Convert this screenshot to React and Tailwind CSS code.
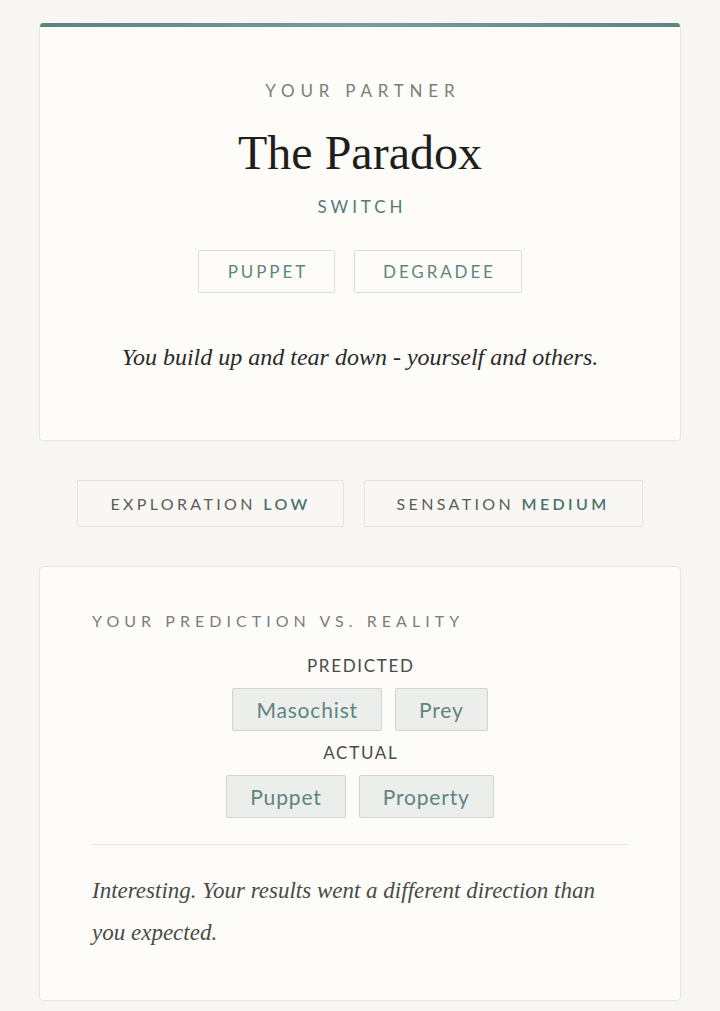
import React from "react";

function Pill({ children }) {
  return (
    <div className="h-[43px] px-[23px] flex items-center border border-[#cfd4d1] bg-[#eceeec] rounded-[2px] font-[Lato,'Open_Sans',sans-serif] text-[21px] text-[#5f857f] tracking-[0.04em]">
      {children}
    </div>
  );
}

function Stat({ label, value }) {
  return (
    <div className="h-[47px] px-[32px] flex items-center border border-[#e6e3de] bg-[#f9f7f4] rounded-[2px] font-[Lato,'Open_Sans',sans-serif] text-[16px] tracking-[0.21em] text-[#5c5c58]">
      {label}&nbsp;<span className="text-[#4a726c] font-semibold">{value}</span>
    </div>
  );
}

export default function App() {
  return (
    <div className="min-h-[1011px] bg-[#f8f6f2] pt-[23px] px-[39px] pb-[10px]">
      {/* Card 1 */}
      <div className="bg-[#fdfcf9] border border-[#e8e5df] border-t-0 rounded-[4px] overflow-hidden">
        <div className="h-[4px] bg-gradient-to-r from-[#5a8580] via-[#7c9b97] to-[#5e857f]" />
        <div className="flex flex-col items-center pt-[52px] pb-[65px]">
          <div className="h-[24px] leading-[24px] font-[Lato,'Open_Sans',sans-serif] text-[17px] tracking-[0.34em] text-[#7d7d78] pl-[0.34em]">YOUR PARTNER</div>
          <div className="mt-[20px] h-[60px] leading-[60px] font-['Liberation_Serif','DejaVu_Serif',serif] text-[48px] text-[#1e1e1c]">The Paradox</div>
          <div className="mt-[12px] h-[24px] leading-[24px] font-[Lato,'Open_Sans',sans-serif] text-[17px] tracking-[0.23em] text-[#557a75] pl-[0.23em]">SWITCH</div>
          <div className="mt-[31px] flex gap-[19px]">
            <div className="w-[137px] h-[43px] flex items-center justify-center border border-[#d9ddd9] rounded-[2px] font-[Lato,'Open_Sans',sans-serif] text-[17px] tracking-[0.17em] pl-[0.17em] text-[#5f857f]">PUPPET</div>
            <div className="w-[168px] h-[43px] flex items-center justify-center border border-[#d9ddd9] rounded-[2px] font-[Lato,'Open_Sans',sans-serif] text-[17px] tracking-[0.17em] pl-[0.17em] text-[#5f857f]">DEGRADEE</div>
          </div>
          <div className="mt-[46px] h-[36px] leading-[36px] font-['Liberation_Serif','DejaVu_Serif',serif] text-[24px] italic text-[#2a2a28]">
            You build up and tear down - yourself and others.
          </div>
        </div>
      </div>

      {/* Stats */}
      <div className="mt-[39px] flex justify-center gap-[20px]">
        <Stat label="EXPLORATION" value="LOW" />
        <Stat label="SENSATION" value="MEDIUM" />
      </div>

      {/* Card 3 */}
      <div className="mt-[39px] bg-[#fdfcf9] border border-[#e8e5df] rounded-[4px] px-[52px] pt-[42px] pb-[46px]">
        <div className="h-[24px] leading-[24px] font-[Lato,'Open_Sans',sans-serif] text-[16px] tracking-[0.315em] text-[#7d7d78]">YOUR PREDICTION VS. REALITY</div>
        <div className="mt-[21px] h-[24px] leading-[24px] text-center font-[Lato,'Open_Sans',sans-serif] text-[17px] tracking-[0.1em] pl-[0.1em] text-[#4a4a46]">PREDICTED</div>
        <div className="mt-[10px] flex justify-center gap-[13px]">
          <Pill>Masochist</Pill>
          <Pill>Prey</Pill>
        </div>
        <div className="mt-[10px] h-[24px] leading-[24px] text-center font-[Lato,'Open_Sans',sans-serif] text-[17px] tracking-[0.1em] pl-[0.1em] text-[#4a4a46]">ACTUAL</div>
        <div className="mt-[10px] flex justify-center gap-[13px]">
          <Pill>Puppet</Pill>
          <Pill>Property</Pill>
        </div>
        <div className="mt-[26px] h-px bg-[#e6e3de]" />
        <div className="mt-[25px] font-['Liberation_Serif','DejaVu_Serif',serif] text-[23px] leading-[42px] italic text-[#4a4a47]">
          Interesting. Your results went a different direction than you expected.
        </div>
      </div>
    </div>
  );
}
